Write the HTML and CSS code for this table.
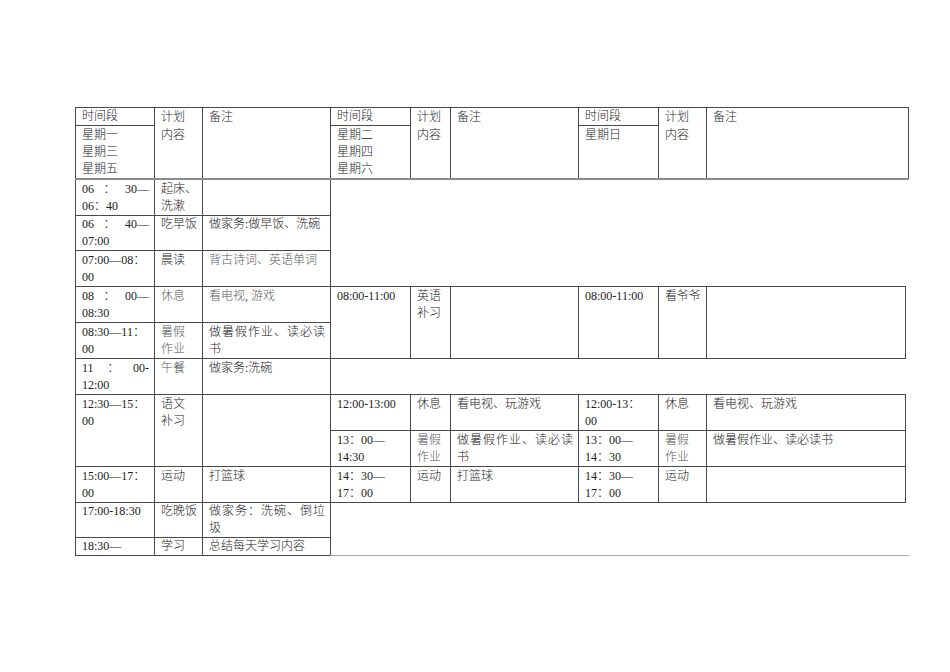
FILE: index.html
```html
<!DOCTYPE html>
<html lang="zh-CN">
<head>
<meta charset="utf-8">
<title>暑假作息时间表</title>
<link rel="stylesheet" href="styles.css">
</head>
<body>
<table class="plan">
  <colgroup>
    <col class="c-time"><col class="c-plan"><col class="c-note">
    <col class="c-time2"><col class="c-plan2"><col class="c-note">
    <col class="c-time2"><col class="c-plan"><col class="c-note3"><col class="c-edge">
  </colgroup>
  <tr class="h-top">
    <td class="head-time">时间段</td>
    <td rowspan="2" class="head">计划<br>内容</td>
    <td rowspan="2" class="head">备注</td>
    <td class="head-time">时间段</td>
    <td rowspan="2" class="head">计划<br>内容</td>
    <td rowspan="2" class="head">备注</td>
    <td class="head-time">时间段</td>
    <td rowspan="2" class="head">计划<br>内容</td>
    <td rowspan="2" colspan="2" class="head">备注</td>
  </tr>
  <tr class="h-days">
    <td class="head">星期一<br>星期三<br>星期五</td>
    <td class="head">星期二<br>星期四<br>星期六</td>
    <td class="head">星期日</td>
  </tr>
  <tr class="r36">
    <td><span class="just"><span>06</span><span>：</span><span>30—</span></span>06：40</td>
    <td>起床、<br>洗漱</td>
    <td></td>
    <td colspan="7" rowspan="3" class="blank"></td>
  </tr>
  <tr class="r35">
    <td><span class="just"><span>06</span><span>：</span><span>40—</span></span>07:00</td>
    <td>吃早饭</td>
    <td>做家务:做早饭、洗碗</td>
  </tr>
  <tr class="r36">
    <td>07:00—08：<br>00</td>
    <td>晨读</td>
    <td class="soft">背古诗词、英语单词</td>
  </tr>
  <tr class="r36">
    <td><span class="just"><span>08</span><span>：</span><span>00—</span></span>08:30</td>
    <td class="soft">休息</td>
    <td class="soft">看电视, 游戏</td>
    <td rowspan="2">08:00-11:00</td>
    <td rowspan="2">英语<br>补习</td>
    <td rowspan="2"></td>
    <td rowspan="2">08:00-11:00</td>
    <td rowspan="2">看爷爷</td>
    <td rowspan="2"></td>
    <td rowspan="2" class="blank"></td>
  </tr>
  <tr class="r36">
    <td>08:30—11：<br>00</td>
    <td class="soft">暑假<br>作业</td>
    <td>做暑假作业、读必读书</td>
  </tr>
  <tr class="r36">
    <td><span class="just"><span>11</span><span>：</span><span>00-</span></span>12:00</td>
    <td class="soft">午餐</td>
    <td>做家务:洗碗</td>
    <td colspan="7" class="blank"></td>
  </tr>
  <tr class="r36">
    <td rowspan="2">12:30—15：<br>00</td>
    <td rowspan="2">语文<br>补习</td>
    <td rowspan="2"></td>
    <td>12:00-13:00</td>
    <td>休息</td>
    <td>看电视、玩游戏</td>
    <td>12:00-13：<br>00</td>
    <td>休息</td>
    <td>看电视、玩游戏</td>
    <td rowspan="3" class="blank"></td>
  </tr>
  <tr class="r36">
    <td>13：00—<br>14:30</td>
    <td class="soft">暑假<br>作业</td>
    <td>做暑假作业、读必读书</td>
    <td>13：00—<br>14：30</td>
    <td class="soft">暑假<br>作业</td>
    <td>做暑假作业、读必读书</td>
  </tr>
  <tr class="r36">
    <td>15:00—17：<br>00</td>
    <td>运动</td>
    <td>打篮球</td>
    <td>14：30—<br>17：00</td>
    <td>运动</td>
    <td>打篮球</td>
    <td>14：30—<br>17：00</td>
    <td>运动</td>
    <td></td>
  </tr>
  <tr class="r35">
    <td>17:00-18:30</td>
    <td>吃晚饭</td>
    <td>做家务：洗碗、倒垃圾</td>
    <td colspan="7" rowspan="2" class="blank base"></td>
  </tr>
  <tr class="r18">
    <td>18:30—</td>
    <td>学习</td>
    <td>总结每天学习内容</td>
  </tr>
</table>
</body>
</html>
```
FILE: styles.css
```css
html, body {
  margin: 0;
  padding: 0;
  background: #ffffff;
}

body {
  font-family: "Liberation Serif", "Noto Sans CJK SC", serif;
  font-size: 12px;
  line-height: 17px;
  color: #222222;
}

.plan {
  margin: 107px 0 0 75px;
  border-collapse: collapse;
  table-layout: fixed;
  width: 833px;
}

.c-time { width: 79px; }
.c-plan { width: 48px; }
.c-note { width: 128px; }
.c-time2 { width: 80px; }
.c-plan2 { width: 40px; }
.c-note3 { width: 199px; }
.c-edge { width: 3px; }

.plan td {
  border: 1px solid #4a4a4a;
  padding: 1px 5px 0 6px;
  vertical-align: top;
  text-align: justify;
  font-weight: 300;
  overflow: hidden;
}

.plan td.blank {
  border: none;
  padding: 0;
}

.plan td.base {
  border-bottom: 1px solid #a8a8a8;
}

.h-top { height: 18px; }
.h-days { height: 51px; }
.r36 { height: 36px; }
.r35 { height: 35px; }
.r18 { height: 18px; }

.r35 td,
.r18 td {
  padding-top: 0;
}

.h-top td.head-time {
  padding-top: 0;
}

.h-days td {
  border-bottom: 2px solid #8a8a8a;
  line-height: 17px;
  padding-top: 1px;
}

.plan td.head[rowspan] {
  border-bottom: 2px solid #8a8a8a;
  line-height: 18px;
  padding-top: 0;
}

.just {
  display: flex;
  justify-content: space-between;
}

.soft {
  color: #5a5a5a;
}
```
